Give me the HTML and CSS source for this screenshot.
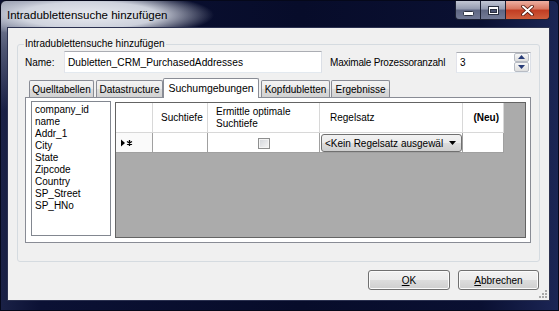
FILE: index.html
```html
<!DOCTYPE html>
<html>
<head>
<meta charset="utf-8">
<link rel="stylesheet" href="styles.css">
</head>
<body>
<div class="window">
  <div class="titlebar">
    <span class="title">Intradublettensuche hinzufügen</span>
    <div class="caption">
      <div class="cbtn cmin"><svg width="11" height="5" viewBox="0 0 11 5"><rect x="0.5" y="0.5" width="10" height="4" rx="1" fill="#fff" stroke="#2a3040"/></svg></div>
      <div class="cbtn cmax"><svg width="11" height="9" viewBox="0 0 11 9"><rect x="0.5" y="0.5" width="10" height="8" fill="#fff" stroke="#2a3040"/><rect x="2.5" y="3.5" width="6" height="3" fill="#4a5270" stroke="#2a3040"/></svg></div>
      <div class="cbtn cclose"><svg width="13" height="11" viewBox="0 0 13 11"><path d="M2 1.5 L11 9.5 M11 1.5 L2 9.5" stroke="#4a1208" stroke-width="3.6" stroke-linecap="round"/><path d="M2 1.5 L11 9.5 M11 1.5 L2 9.5" stroke="#fff" stroke-width="2" stroke-linecap="round"/></svg></div>
    </div>
  </div>
  <div class="client">
    <fieldset class="group">
      <legend class="group-title">Intradublettensuche hinzufügen</legend>
      <div class="name-row">
        <span class="lbl-name">Name:</span>
        <div class="textbox tb-name">Dubletten_CRM_PurchasedAddresses</div>
        <span class="lbl-proc">Maximale Prozessoranzahl</span>
        <div class="textbox spinner">
          <span>3</span>
          <div class="spin-btns">
            <div class="spin-btn"><svg width="7" height="4" viewBox="0 0 7 4"><path d="M0 4 L3.5 0 L7 4Z" fill="#283c78"/></svg></div>
            <div class="spin-btn"><svg width="7" height="4" viewBox="0 0 7 4"><path d="M0 0 L7 0 L3.5 4Z" fill="#283c78"/></svg></div>
          </div>
        </div>
      </div>
      <div class="tabs">
        <div class="tab t-quelle">Quelltabellen</div>
        <div class="tab t-data">Datastructure</div>
        <div class="tab tab-sel t-such">Suchumgebungen</div>
        <div class="tab t-kopf">Kopfdubletten</div>
        <div class="tab t-erg">Ergebnisse</div>
      </div>
      <div class="tabpanel">
        <div class="listbox">
          <div>company_id</div>
          <div>name</div>
          <div>Addr_1</div>
          <div>City</div>
          <div>State</div>
          <div>Zipcode</div>
          <div>Country</div>
          <div>SP_Street</div>
          <div>SP_HNo</div>
        </div>
        <div class="grid">
          <div class="grid-row grid-head">
            <div class="cell c-rh"></div>
            <div class="cell c-tiefe">Suchtiefe</div>
            <div class="cell c-erm">Ermittle optimale<br>Suchtiefe</div>
            <div class="cell c-regel">Regelsatz</div>
            <div class="cell c-neu">(Neu)</div>
          </div>
          <div class="grid-row grid-data">
            <div class="cell c-rh rh-data"><svg width="12" height="8" viewBox="0 0 12 8"><path d="M0 0.5 L4 4 L0 7.5Z" fill="#000"/><path d="M8.5 1 V7 M6 2.5 L11 5.5 M11 2.5 L6 5.5" stroke="#000" stroke-width="1.3"/></svg></div>
            <div class="cell c-tiefe"></div>
            <div class="cell c-erm"><div class="checkbox"></div></div>
            <div class="cell c-regel"><div class="combo"><span>&lt;Kein Regelsatz ausgewäl</span><svg width="7" height="4" viewBox="0 0 7 4"><path d="M0 0 L7 0 L3.5 4Z" fill="#000"/></svg></div></div>
            <div class="cell c-neu"></div>
          </div>
        </div>
      </div>
    </fieldset>
    <div class="buttons">
      <div class="btn btn-ok"><span><u>O</u>K</span></div>
      <div class="btn btn-cancel"><span><u>A</u>bbrechen</span></div>
    </div>
    <svg class="grip" width="8" height="8" viewBox="0 0 8 8"><g fill="#a8a8a8"><rect x="6" y="0" width="2" height="2"/><rect x="3" y="3" width="2" height="2"/><rect x="6" y="3" width="2" height="2"/><rect x="0" y="6" width="2" height="2"/><rect x="3" y="6" width="2" height="2"/><rect x="6" y="6" width="2" height="2"/></g></svg>
  </div>
</div>
</body>
</html>
```

FILE: styles.css
```css
* { box-sizing: border-box; }
html, body { margin: 0; padding: 0; }
body {
  width: 559px;
  height: 311px;
  overflow: hidden;
  background: #0b1030;
  font-family: "Liberation Sans", Arial, sans-serif;
  font-size: 10px;
  color: #000;
}
.window {
  width: 559px;
  height: 311px;
  display: flex;
  flex-direction: column;
  border: 1px solid #05081a;
  border-radius: 6px 6px 0 0;
  padding: 0 9px 10px 7px;
  background:
    radial-gradient(ellipse 125px 24px at 88px 14px, rgba(232,234,240,1) 0%, rgba(214,218,228,0.95) 55%, rgba(214,218,228,0) 100%),
    radial-gradient(ellipse 170px 110px at 0 0, rgba(150,156,175,0.95) 0%, rgba(110,118,142,0.6) 45%, rgba(60,68,100,0) 100%),
    linear-gradient(to right, #1a2146 0px, #0b1134 40px, #070c2a 300px, #0a1032 480px, #1c2656 559px);
}
.titlebar {
  height: 27px;
  flex: none;
  display: flex;
  justify-content: space-between;
  align-items: flex-start;
}
.title {
  font-size: 11.5px;
  line-height: 28px;
  margin-left: -1px;
}
.caption {
  display: flex;
  margin-right: -1px;
}
.cbtn {
  height: 19px;
  display: flex;
  align-items: center;
  justify-content: center;
  border: 1px solid #1c2134;
  border-top: none;
}
.cmin {
  width: 26px;
  border-radius: 0 0 0 4px;
  background: linear-gradient(#c2c7d4, #939ab0 45%, #5e6682 50%, #727a96);
}
.cmin svg { margin-top: 6px; }
.cmax {
  width: 25px;
  border-left: none;
  background: linear-gradient(#c2c7d4, #939ab0 45%, #5e6682 50%, #727a96);
}
.cclose {
  width: 44px;
  border-left: none;
  border-radius: 0 0 4px 0;
  background: linear-gradient(#eeb0a2, #d77660 45%, #c13c22 50%, #cf5e3c);
}
.client {
  flex: 1;
  position: relative;
  display: flex;
  flex-direction: column;
  background: #f0f0f0;
  box-shadow: 0 0 0 1px #2b3150;
}
.group {
  margin: 10px 0 0 9px;
  width: 523px;
  height: 224px;
  min-width: 0;
  border: 1px solid #d5dbe0;
  border-radius: 3px;
  padding: 0 8px 0 7px;
}
.group-title {
  padding: 0 1px;
  margin-left: -1px;
  line-height: 12px;
  font-size: 10px;
}
.name-row {
  display: flex;
  align-items: center;
  margin-top: 1px;
  height: 22px;
}
.lbl-name { width: 39px; }
.lbl-proc { width: 126px; margin-left: 8px; letter-spacing: -0.2px; }
.textbox {
  background: #fff;
  border: 1px solid;
  border-color: #abadb3 #dbdfe6 #e3e9ef #e2e3ea;
  display: flex;
  align-items: center;
  padding-left: 3px;
  height: 22px;
}
.tb-name { width: 258px; font-size: 10.2px; }
.spinner {
  width: 75px;
  height: 21px;
  padding-right: 1px;
  justify-content: space-between;
}
.spin-btns {
  display: flex;
  flex-direction: column;
  width: 15px;
  height: 19px;
}
.spin-btn {
  flex: 1;
  border: 1px solid #b8bcc4;
  border-radius: 2px;
  background: linear-gradient(#f8f8f8, #dedede);
  display: flex;
  align-items: center;
  justify-content: center;
}
.tabs {
  display: flex;
  align-items: flex-end;
  height: 19px;
  margin-top: 5px;
  padding-left: 4px;
  position: relative;
  z-index: 1;
}
.tab {
  height: 17px;
  border: 1px solid #898c95;
  border-bottom: none;
  border-radius: 2px 2px 0 0;
  background: linear-gradient(#f3f3f3, #ebebeb 50%, #dddddd 50%, #d2d2d2);
  display: flex;
  align-items: center;
  justify-content: center;
  white-space: nowrap;
}
.tab-sel {
  height: 20px;
  margin-bottom: -1px;
  background: #fff;
  font-size: 10.5px;
  padding-bottom: 2px;
}
.t-quelle { width: 65px; }
.t-data { width: 67px; margin-left: 2px; }
.t-such { width: 96px; }
.t-kopf { width: 69px; margin-left: 2px; }
.t-erg { width: 59px; margin-left: 1px; }
.tabpanel {
  height: 146px;
  border: 1px solid #898c95;
  background: #fff;
  display: flex;
  align-items: flex-start;
  gap: 4px;
  padding: 3px 3px 0 5px;
}
.listbox {
  width: 80px;
  height: 135px;
  border: 1px solid #828790;
  padding: 2px 3px;
  line-height: 12px;
}
.grid {
  width: 411px;
  height: 136px;
  margin-top: 1px;
  border: 1px solid #646464;
  background: #ababab;
}
.grid-row { display: flex; }
.grid-head { height: 30px; }
.grid-data { height: 20px; }
.cell {
  background: #fff;
  border-right: 1px solid #d8d8d8;
  border-bottom: 1px solid #d8d8d8;
  display: flex;
  align-items: center;
}
.grid-data .cell { border-color: #a0a0a0; }
.c-rh { width: 37px; }
.c-tiefe { width: 55px; padding-left: 8px; }
.c-erm { width: 112px; padding-left: 8px; line-height: 12px; }
.c-regel { width: 143px; padding-left: 10px; }
.c-neu { width: 41px; justify-content: flex-end; padding-right: 4px; font-weight: bold; }
.rh-data { padding-left: 5px; background: #fafafa; }
.grid-data .c-erm { justify-content: center; padding-left: 0; padding-top: 1px; }
.checkbox {
  width: 12px;
  height: 11px;
  border: 1px solid #8e8f8f;
  background: linear-gradient(135deg, #d2d5da, #f6f6f6);
  box-shadow: inset 0 0 0 1px #f4f4f4;
}
.grid-data .c-regel { padding-left: 0; align-items: flex-start; }
.combo {
  margin: 1px 0 0 1px;
  width: 141px;
  height: 18px;
  border: 1px solid #707070;
  border-radius: 3px;
  background: linear-gradient(#f2f2f2, #ebebeb 50%, #dddddd 50%, #cfcfcf);
  display: flex;
  align-items: center;
  justify-content: space-between;
  padding: 0 5px 0 3px;
  white-space: nowrap;
  overflow: hidden;
}
.buttons {
  display: flex;
  justify-content: flex-end;
  gap: 8px;
  margin-top: 8px;
  padding-right: 10px;
}
.btn {
  height: 20px;
  border: 1px solid #707070;
  border-radius: 3px;
  background: linear-gradient(#f2f2f2, #ebebeb 50%, #dddddd 50%, #cfcfcf);
  box-shadow: inset 0 0 0 1px #fbfbfb;
  display: flex;
  align-items: center;
  justify-content: center;
}
.btn-ok { width: 82px; }
.btn-cancel { width: 81px; }
.grip {
  position: absolute;
  right: 2px;
  bottom: 2px;
}
```
